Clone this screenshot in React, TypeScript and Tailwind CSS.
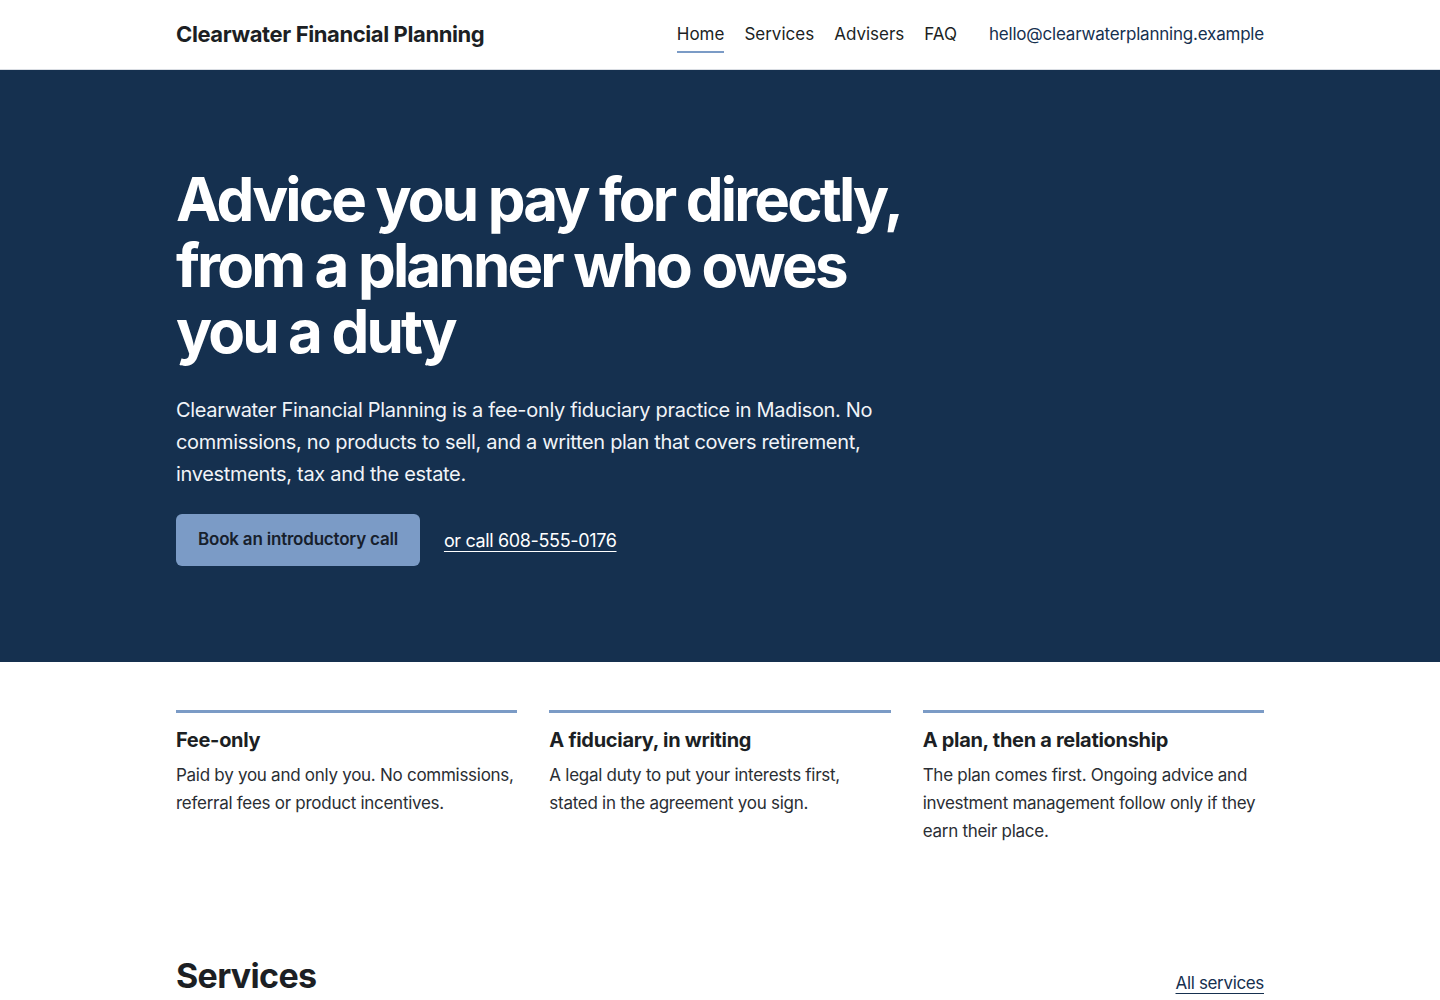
import { useState } from 'react'

const navLinks = ['Home', 'Services', 'Advisers', 'FAQ']

const principles = [
  {
    title: 'Fee-only',
    body: 'Paid by you and only you. No commissions, referral fees or product incentives.',
  },
  {
    title: 'A fiduciary, in writing',
    body: 'A legal duty to put your interests first, stated in the agreement you sign.',
  },
  {
    title: 'A plan, then a relationship',
    body: 'The plan comes first. Ongoing advice and investment management follow only if they earn their place.',
  },
]

function Header() {
  const [active, setActive] = useState('Home')
  return (
    <header className="border-b border-[#d9dde3] bg-white">
      <div className="mx-auto flex h-[69px] max-w-[1088px] items-center justify-between">
        <a href="#" className="text-[22px] font-bold tracking-[-0.018em] text-[#1c1f24]">
          Clearwater Financial Planning
        </a>
        <nav className="flex items-center">
          <ul className="flex items-center gap-5">
            {navLinks.map(link => (
              <li key={link}>
                <a
                  href="#"
                  onClick={e => { e.preventDefault(); setActive(link) }}
                  className={`block border-b-2 pt-[6px] pb-[4px] text-[17px] text-[#1c1f24] ${
                    active === link ? 'border-[#7b9bc6]' : 'border-transparent'
                  }`}
                >
                  {link}
                </a>
              </li>
            ))}
          </ul>
          <a href="#" className="ml-8 text-[17px] tracking-[-0.012em] text-[#16304f]">
            hello@clearwaterplanning.example
          </a>
        </nav>
      </div>
    </header>
  )
}

function Hero() {
  return (
    <section className="bg-[#15304f] text-white">
      <div className="mx-auto max-w-[1088px] pt-[96px] pb-[96px]">
        <h1 className="max-w-[760px] text-[60px] font-bold leading-[66px] tracking-[-0.047em]">
          Advice you pay for directly, from a planner who owes you a duty
        </h1>
        <p className="mt-[30px] max-w-[720px] text-[20px] leading-[32px] tracking-[-0.016em] text-[#f1f4f8]">
          Clearwater Financial Planning is a fee-only fiduciary practice in Madison. No commissions, no products to
          sell, and a written plan that covers retirement, investments, tax and the estate.
        </p>
        <div className="mt-[24px] flex items-center gap-6">
          <a
            href="#"
            className="flex h-[52px] items-center rounded-md bg-[#7b9bc6] px-[22px] text-[17px] font-semibold tracking-[-0.012em] text-[#17202c]"
          >
            Book an introductory call
          </a>
          <a href="#" className="text-[18px] tracking-[-0.02em] text-white underline underline-offset-4">
            or call 608-555-0176
          </a>
        </div>
      </div>
    </section>
  )
}

function Principles() {
  return (
    <section className="bg-white">
      <div className="mx-auto grid max-w-[1088px] grid-cols-3 gap-8 pt-[48px]">
        {principles.map(p => (
          <div key={p.title} className="border-t-[3px] border-[#7b9bc6] pt-[13px]">
            <h3 className="text-[20px] font-bold leading-[28px] tracking-[-0.015em] text-[#1c1f24]">{p.title}</h3>
            <p className="mt-[7px] text-[17px] leading-[28px] tracking-[-0.016em] text-[#2a2e34]">{p.body}</p>
          </div>
        ))}
      </div>
    </section>
  )
}

function ServicesIntro() {
  return (
    <section className="bg-white">
      <div className="mx-auto flex max-w-[1088px] items-end justify-between pt-[111px]">
        <h2 className="text-[34px] font-bold leading-[40px] tracking-[-0.02em] text-[#1c1f24]">Services</h2>
        <a href="#" className="text-[17px] tracking-[-0.02em] text-[#16304f] underline underline-offset-4">
          All services
        </a>
      </div>
    </section>
  )
}

export default function App() {
  return (
    <div className="min-h-screen bg-white font-['Inter',sans-serif] antialiased">
      <Header />
      <Hero />
      <Principles />
      <ServicesIntro />
    </div>
  )
}
